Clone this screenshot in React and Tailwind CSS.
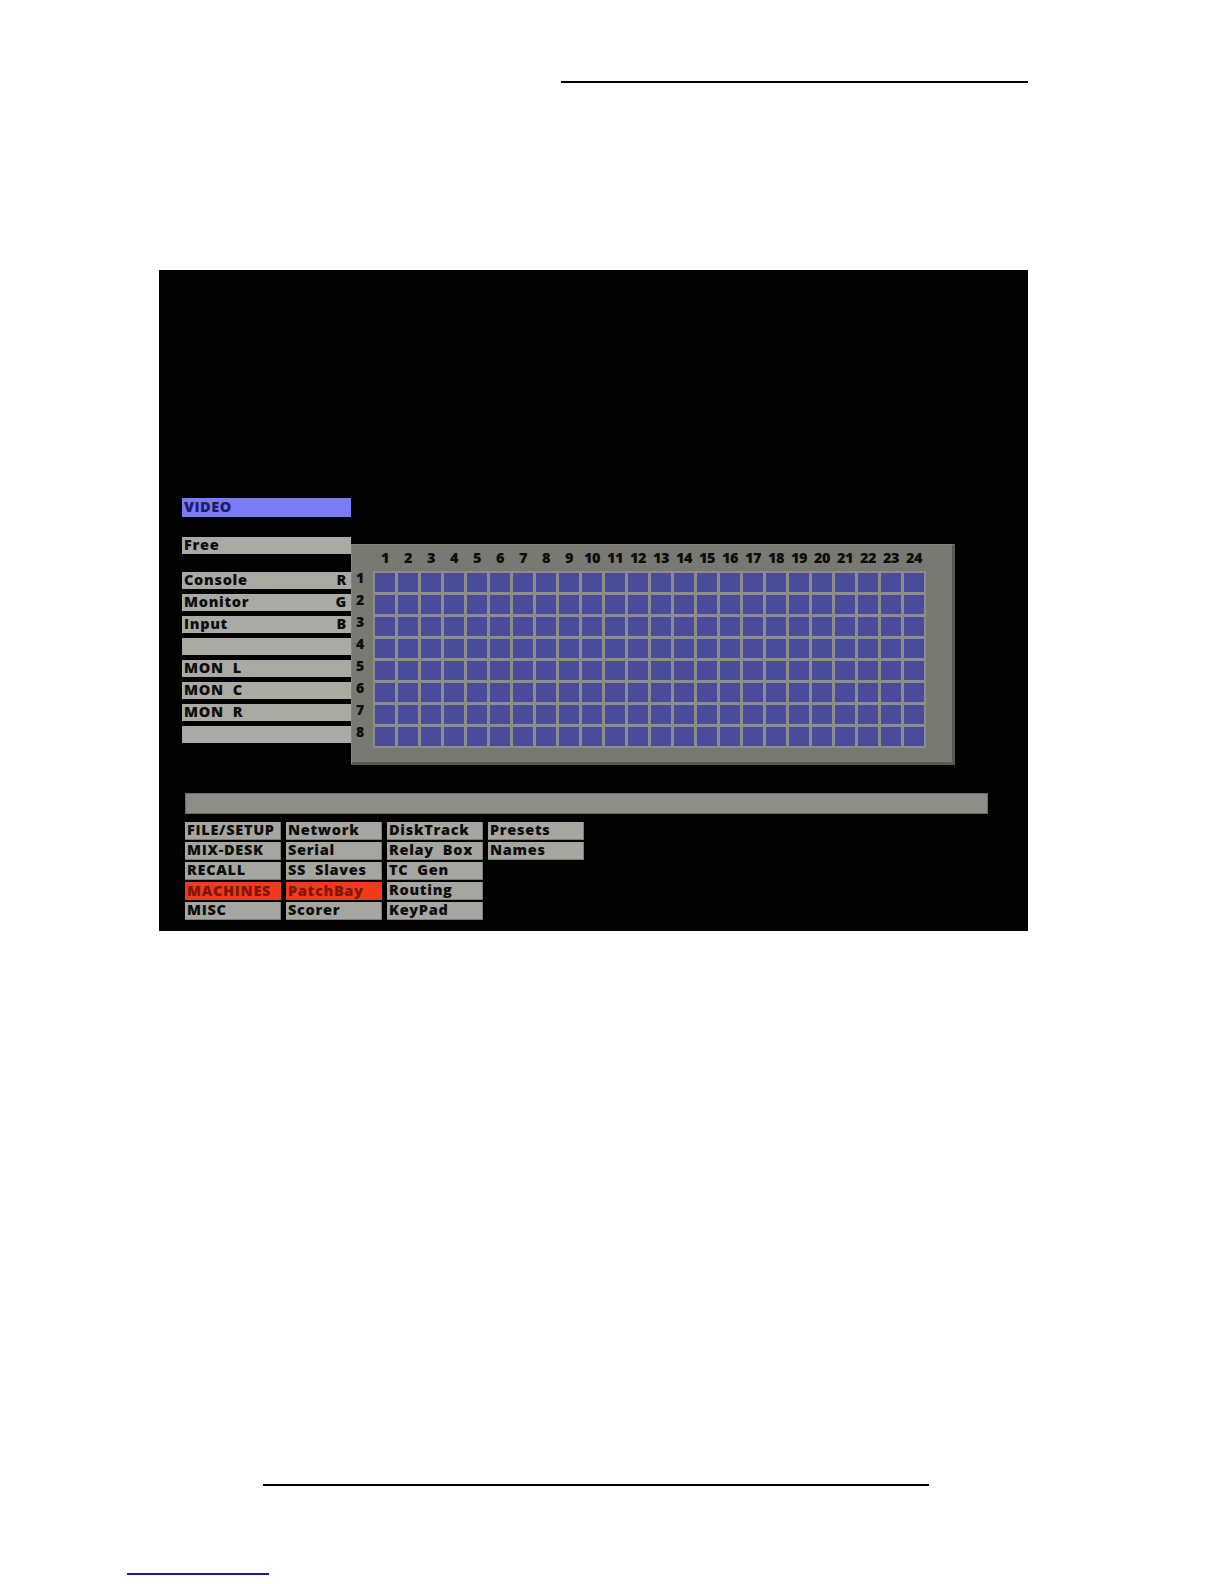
import React from "react";

const LABELS = [
  { name: "Console", tag: "R" },
  { name: "Monitor", tag: "G" },
  { name: "Input", tag: "B" },
  { name: "", tag: "" },
  { name: "MON  L", tag: "" },
  { name: "MON  C", tag: "" },
  { name: "MON  R", tag: "" },
  { name: "", tag: "" },
];

const MENU = [
  ["FILE/SETUP", "MIX-DESK", "RECALL", "MACHINES", "MISC"],
  ["Network", "Serial", "SS  Slaves", "PatchBay", "Scorer"],
  ["DiskTrack", "Relay  Box", "TC  Gen", "Routing", "KeyPad"],
  ["Presets", "Names"],
];

const ACTIVE = ["MACHINES", "PatchBay"];

const COLS = Array.from({ length: 24 }, (_, i) => i + 1);
const ROWS = Array.from({ length: 8 }, (_, i) => i + 1);

const font = { fontFamily: '"Open Sans", "DejaVu Sans", sans-serif' };

// -----------------------------------------
// LEFT LABEL STRIP
// -----------------------------------------
const LabelBar = ({ name, tag }) => (
  <div className="flex h-[17px] w-[169px] items-center justify-between bg-[#aaaaa5] pl-[2px] pr-[4px] text-[14.5px] font-extrabold leading-none tracking-[0.7px] text-[#0d0d0d] whitespace-pre">
    <span>{name}</span>
    <span>{tag}</span>
  </div>
);

// -----------------------------------------
// PATCH GRID
// -----------------------------------------
const PatchGrid = () => (
  <div className="mt-[7px] h-[221px] w-[604px] border-l border-t border-r-[3px] border-b-[3px] border-l-[#85857f] border-t-[#85857f] border-r-[#5a5a55] border-b-[#5a5a55] bg-[#797973] pl-[3px] pt-[5px]">
    <div className="flex">
      <div className="w-[20px]" />
      <div className="grid grid-cols-[repeat(24,20px)] gap-x-[3px]">
        {COLS.map((c) => (
          <div
            key={c}
            className="flex h-[17px] items-center justify-center text-[14.5px] font-extrabold leading-none tracking-[-0.4px] text-[#0d0d0d] whitespace-nowrap"
          >
            {c}
          </div>
        ))}
      </div>
    </div>

    <div className="mt-[4px] flex">
      <div className="flex w-[18px] flex-col gap-[3px]">
        {ROWS.map((r) => (
          <div
            key={r}
            className="h-[19px] pl-[1px] text-[14px] font-extrabold leading-none text-[#0d0d0d]"
          >
            {r}
          </div>
        ))}
      </div>
      <div className="grid grid-cols-[repeat(24,20px)] gap-[3px] bg-[#8d8d88] p-[2px]">
        {ROWS.map((r) =>
          COLS.map((c) => (
            <div key={`${r}-${c}`} className="h-[19px] w-[20px] bg-[#4b4b9b]" />
          ))
        )}
      </div>
    </div>
  </div>
);

// -----------------------------------------
// BOTTOM MENU
// -----------------------------------------
const MenuButton = ({ label }) => {
  const active = ACTIVE.includes(label);
  return (
    <div
      className={
        active
          ? "flex h-[18px] w-[96px] items-center bg-[#f23a1c] pl-[2px] text-[14.5px] font-extrabold leading-none tracking-[0.7px] text-[#7e160b] whitespace-pre"
          : "flex h-[18px] w-[96px] items-center border-b border-r border-[#7c7c78] bg-[#a6a6a1] pl-[2px] text-[14.5px] font-extrabold leading-none tracking-[0.7px] text-[#0d0d0d] whitespace-pre"
      }
    >
      {label}
    </div>
  );
};

const App = () => {
  return (
    <div className="h-[1584px] w-[1224px] overflow-hidden bg-white" style={font}>
      {/* TOP RULE */}
      <div className="ml-[561px] mt-[81px] h-[2px] w-[467px] bg-black" />

      {/* SCREEN */}
      <div className="ml-[159px] mt-[187px] h-[661px] w-[869px] bg-[#020202] pl-[23px] pt-[228px]">
        <div className="flex h-[19px] w-[169px] items-center bg-[#7c7cf2] pl-[2px] text-[14.5px] font-extrabold leading-none tracking-[0.5px] text-[#1c1c6e]">
          VIDEO
        </div>

        <div className="mt-[20px] flex items-start">
          <div className="flex flex-col">
            <LabelBar name="Free" tag="" />
            <div className="mt-[18px] flex flex-col gap-[5px]">
              {LABELS.map((l, i) => (
                <LabelBar key={i} name={l.name} tag={l.tag} />
              ))}
            </div>
          </div>
          <PatchGrid />
        </div>

        {/* STATUS BAR */}
        <div className="ml-[3px] mt-[28px] h-[21px] w-[803px] border border-[#6c6c68] bg-[#8e8e89]" />

        {/* MENU */}
        <div className="ml-[3px] mt-[8px] flex gap-x-[5px]">
          {MENU.map((col, i) => (
            <div key={i} className="flex flex-col gap-y-[2px]">
              {col.map((label) => (
                <MenuButton key={label} label={label} />
              ))}
            </div>
          ))}
        </div>
      </div>

      {/* BOTTOM RULE */}
      <div className="ml-[263px] mt-[553px] h-[2px] w-[666px] bg-black" />

      {/* LINK RULE */}
      <div className="ml-[127px] mt-[87px] h-[2px] w-[142px] bg-[#1c1c8e]" />
    </div>
  );
};

export default App;
